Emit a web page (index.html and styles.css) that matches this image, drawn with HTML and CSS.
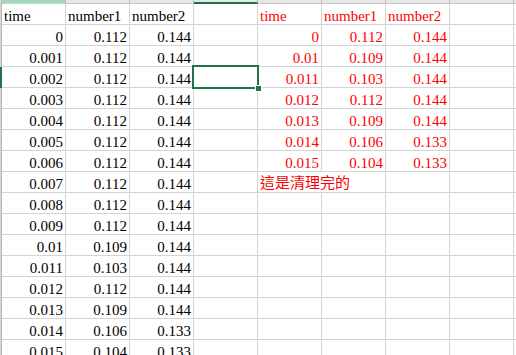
FILE: index.html
```html
<!DOCTYPE html>
<html>
<head>
<meta charset="utf-8">
<link rel="stylesheet" href="styles.css">
</head>
<body>
<div class="sheet">
  <div class="row hdr">
    <div class="rh"></div>
    <div class="c ch sel-a"></div><div class="c ch"></div><div class="c ch"></div><div class="c ch sel-d"></div><div class="c ch"></div><div class="c ch"></div><div class="c ch"></div><div class="c ch"></div><div class="c ch"></div>
  </div>
  <div class="row"><div class="rh"></div><div class="c t">time</div><div class="c t">number1</div><div class="c t">number2</div><div class="c"></div><div class="c t red">time</div><div class="c t red">number1</div><div class="c t red">number2</div><div class="c"></div><div class="c"></div></div>
  <div class="row"><div class="rh"></div><div class="c n">0</div><div class="c n">0.112</div><div class="c n">0.144</div><div class="c"></div><div class="c n red">0</div><div class="c n red">0.112</div><div class="c n red">0.144</div><div class="c"></div><div class="c"></div></div>
  <div class="row"><div class="rh"></div><div class="c n">0.001</div><div class="c n">0.112</div><div class="c n">0.144</div><div class="c"></div><div class="c n red">0.01</div><div class="c n red">0.109</div><div class="c n red">0.144</div><div class="c"></div><div class="c"></div></div>
  <div class="row"><div class="rh active"></div><div class="c n">0.002</div><div class="c n">0.112</div><div class="c n">0.144</div><div class="c selcell"><div class="selbox"><span class="handle"></span></div></div><div class="c n red">0.011</div><div class="c n red">0.103</div><div class="c n red">0.144</div><div class="c"></div><div class="c"></div></div>
  <div class="row"><div class="rh"></div><div class="c n">0.003</div><div class="c n">0.112</div><div class="c n">0.144</div><div class="c"></div><div class="c n red">0.012</div><div class="c n red">0.112</div><div class="c n red">0.144</div><div class="c"></div><div class="c"></div></div>
  <div class="row"><div class="rh"></div><div class="c n">0.004</div><div class="c n">0.112</div><div class="c n">0.144</div><div class="c"></div><div class="c n red">0.013</div><div class="c n red">0.109</div><div class="c n red">0.144</div><div class="c"></div><div class="c"></div></div>
  <div class="row"><div class="rh"></div><div class="c n">0.005</div><div class="c n">0.112</div><div class="c n">0.144</div><div class="c"></div><div class="c n red">0.014</div><div class="c n red">0.106</div><div class="c n red">0.133</div><div class="c"></div><div class="c"></div></div>
  <div class="row"><div class="rh"></div><div class="c n">0.006</div><div class="c n">0.112</div><div class="c n">0.144</div><div class="c"></div><div class="c n red">0.015</div><div class="c n red">0.104</div><div class="c n red">0.133</div><div class="c"></div><div class="c"></div></div>
  <div class="row"><div class="rh"></div><div class="c n">0.007</div><div class="c n">0.112</div><div class="c n">0.144</div><div class="c"></div><div class="c c2 t red cjk">這是清理完的</div><div class="c"></div><div class="c"></div><div class="c"></div></div>
  <div class="row"><div class="rh"></div><div class="c n">0.008</div><div class="c n">0.112</div><div class="c n">0.144</div><div class="c"></div><div class="c"></div><div class="c"></div><div class="c"></div><div class="c"></div><div class="c"></div></div>
  <div class="row"><div class="rh"></div><div class="c n">0.009</div><div class="c n">0.112</div><div class="c n">0.144</div><div class="c"></div><div class="c"></div><div class="c"></div><div class="c"></div><div class="c"></div><div class="c"></div></div>
  <div class="row"><div class="rh"></div><div class="c n">0.01</div><div class="c n">0.109</div><div class="c n">0.144</div><div class="c"></div><div class="c"></div><div class="c"></div><div class="c"></div><div class="c"></div><div class="c"></div></div>
  <div class="row"><div class="rh"></div><div class="c n">0.011</div><div class="c n">0.103</div><div class="c n">0.144</div><div class="c"></div><div class="c"></div><div class="c"></div><div class="c"></div><div class="c"></div><div class="c"></div></div>
  <div class="row"><div class="rh"></div><div class="c n">0.012</div><div class="c n">0.112</div><div class="c n">0.144</div><div class="c"></div><div class="c"></div><div class="c"></div><div class="c"></div><div class="c"></div><div class="c"></div></div>
  <div class="row"><div class="rh"></div><div class="c n">0.013</div><div class="c n">0.109</div><div class="c n">0.144</div><div class="c"></div><div class="c"></div><div class="c"></div><div class="c"></div><div class="c"></div><div class="c"></div></div>
  <div class="row"><div class="rh"></div><div class="c n">0.014</div><div class="c n">0.106</div><div class="c n">0.133</div><div class="c"></div><div class="c"></div><div class="c"></div><div class="c"></div><div class="c"></div><div class="c"></div></div>
  <div class="row"><div class="rh"></div><div class="c n">0.015</div><div class="c n">0.104</div><div class="c n">0.133</div><div class="c"></div><div class="c"></div><div class="c"></div><div class="c"></div><div class="c"></div><div class="c"></div></div>
</div>
</body>
</html>
```
FILE: styles.css
```css
html, body {
  margin: 0;
  padding: 0;
  background: #ffffff;
  overflow: hidden;
}
.sheet {
  width: 516px;
  height: 355px;
  overflow: hidden;
  font-family: "Liberation Serif", "Times New Roman", "DejaVu Serif", serif;
  font-size: 15px;
  color: #000000;
}
.row {
  display: flex;
  height: 21px;
}
.row.hdr {
  height: 4px;
}
.rh {
  flex: none;
  width: 2px;
  box-sizing: border-box;
  background: #d6d6d6;
  border-right: 1px solid #b4b4b4;
}
.rh.active {
  background: #217346;
  border-right-color: #217346;
}
.hdr .rh {
  background: #e6e6e6;
  border-bottom: 1px solid #c6c6c6;
}
.c {
  flex: none;
  position: relative;
  width: 64px;
  height: 21px;
  box-sizing: border-box;
  border-right: 1px solid #d4d4d4;
  border-bottom: 1px solid #d4d4d4;
  padding: 4px 2px 0 2px;
  line-height: 16px;
  white-space: nowrap;
  overflow: visible;
}
.c2 {
  width: 128px;
}
.ch {
  height: 4px;
  padding: 0;
  background: #e6e6e6;
  border-right: 1px solid #bdbdbd;
  border-bottom: 1px solid #c6c6c6;
}
.ch.sel-a {
  background: #a3d7bb;
  border-bottom-color: #bcd9c8;
}
.ch.sel-d {
  background: #e6e6e6;
  border-bottom: 2px solid #217346;
}
.n {
  text-align: right;
}
.t {
  text-align: left;
}
.red {
  color: #ff0000;
}
.cjk {
  font-family: "Noto Sans CJK TC", "Liberation Serif", sans-serif;
  font-size: 15px;
  padding-top: 1px;
  line-height: 18px;
}
.selcell {
  padding: 0;
}
.selbox {
  position: absolute;
  left: -2px;
  top: -2px;
  width: 67px;
  height: 24px;
  box-sizing: border-box;
  border: 2px solid #217346;
  z-index: 2;
}
.handle {
  position: absolute;
  right: -5px;
  bottom: -5px;
  width: 5px;
  height: 5px;
  background: #217346;
  border: 1px solid #ffffff;
}
```
